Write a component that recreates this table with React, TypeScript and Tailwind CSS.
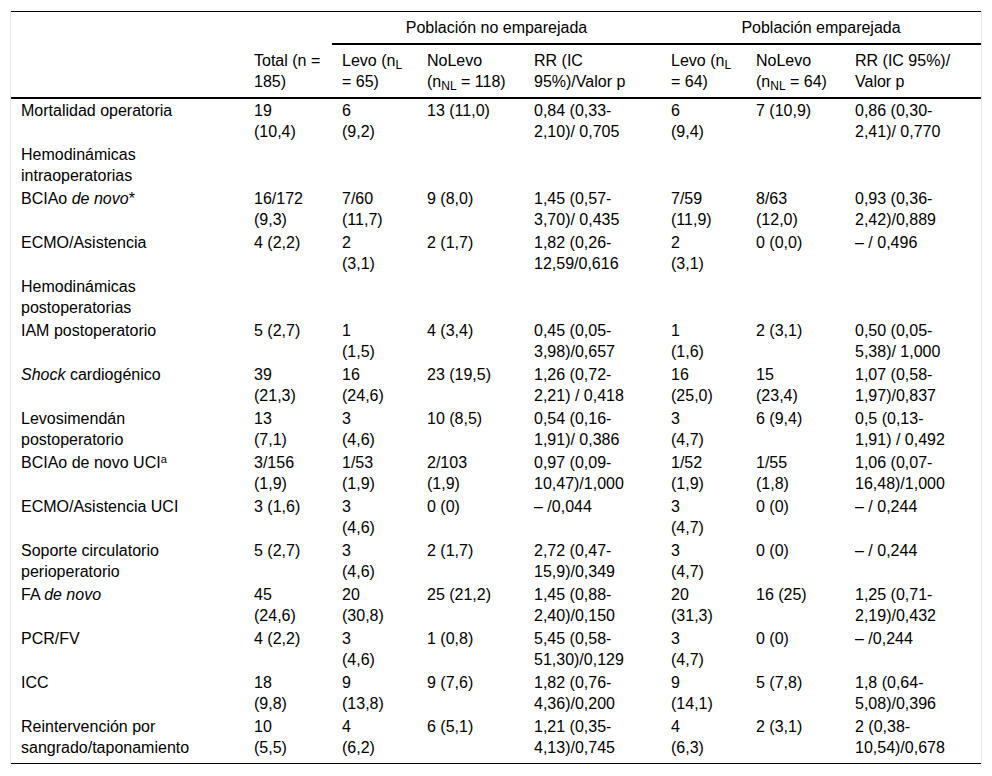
import React from "react";

type Cell = React.ReactNode[];

const rows: { label: React.ReactNode[]; cells: Cell[] }[] = [
  {
    label: ["Mortalidad operatoria"],
    cells: [["19", "(10,4)"], ["6", "(9,2)"], ["13 (11,0)"], ["0,84 (0,33-", "2,10)/ 0,705"], ["6", "(9,4)"], ["7 (10,9)"], ["0,86 (0,30-", "2,41)/ 0,770"]],
  },
  { label: ["Hemodinámicas", "intraoperatorias"], cells: [[], [], [], [], [], [], []] },
  {
    label: [<>BCIAo <i>de novo</i>*</>],
    cells: [["16/172", "(9,3)"], ["7/60", "(11,7)"], ["9 (8,0)"], ["1,45 (0,57-", "3,70)/ 0,435"], ["7/59", "(11,9)"], ["8/63", "(12,0)"], ["0,93 (0,36-", "2,42)/0,889"]],
  },
  {
    label: ["ECMO/Asistencia"],
    cells: [["4 (2,2)"], ["2", "(3,1)"], ["2 (1,7)"], ["1,82 (0,26-", "12,59/0,616"], ["2", "(3,1)"], ["0 (0,0)"], ["– / 0,496"]],
  },
  { label: ["Hemodinámicas", "postoperatorias"], cells: [[], [], [], [], [], [], []] },
  {
    label: ["IAM postoperatorio"],
    cells: [["5 (2,7)"], ["1", "(1,5)"], ["4 (3,4)"], ["0,45 (0,05-", "3,98)/0,657"], ["1", "(1,6)"], ["2 (3,1)"], ["0,50 (0,05-", "5,38)/ 1,000"]],
  },
  {
    label: [<><i>Shock</i> cardiogénico</>],
    cells: [["39", "(21,3)"], ["16", "(24,6)"], ["23 (19,5)"], ["1,26 (0,72-", "2,21) / 0,418"], ["16", "(25,0)"], ["15", "(23,4)"], ["1,07 (0,58-", "1,97)/0,837"]],
  },
  {
    label: ["Levosimendán", "postoperatorio"],
    cells: [["13", "(7,1)"], ["3", "(4,6)"], ["10 (8,5)"], ["0,54 (0,16-", "1,91)/ 0,386"], ["3", "(4,7)"], ["6 (9,4)"], ["0,5 (0,13-", "1,91) / 0,492"]],
  },
  {
    label: [<>BCIAo de novo UCI<sup className="text-[11px]">a</sup></>],
    cells: [["3/156", "(1,9)"], ["1/53", "(1,9)"], ["2/103", "(1,9)"], ["0,97 (0,09-", "10,47)/1,000"], ["1/52", "(1,9)"], ["1/55", "(1,8)"], ["1,06 (0,07-", "16,48)/1,000"]],
  },
  {
    label: ["ECMO/Asistencia UCI"],
    cells: [["3 (1,6)"], ["3", "(4,6)"], ["0 (0)"], ["– /0,044"], ["3", "(4,7)"], ["0 (0)"], ["– / 0,244"]],
  },
  {
    label: ["Soporte circulatorio", "perioperatorio"],
    cells: [["5 (2,7)"], ["3", "(4,6)"], ["2 (1,7)"], ["2,72 (0,47-", "15,9)/0,349"], ["3", "(4,7)"], ["0 (0)"], ["– / 0,244"]],
  },
  {
    label: [<>FA <i>de novo</i></>],
    cells: [["45", "(24,6)"], ["20", "(30,8)"], ["25 (21,2)"], ["1,45 (0,88-", "2,40)/0,150"], ["20", "(31,3)"], ["16 (25)"], ["1,25 (0,71-", "2,19)/0,432"]],
  },
  {
    label: ["PCR/FV"],
    cells: [["4 (2,2)"], ["3", "(4,6)"], ["1 (0,8)"], ["5,45 (0,58-", "51,30)/0,129"], ["3", "(4,7)"], ["0 (0)"], ["– /0,244"]],
  },
  {
    label: ["ICC"],
    cells: [["18", "(9,8)"], ["9", "(13,8)"], ["9 (7,6)"], ["1,82 (0,76-", "4,36)/0,200"], ["9", "(14,1)"], ["5 (7,8)"], ["1,8 (0,64-", "5,08)/0,396"]],
  },
  {
    label: ["Reintervención por", "sangrado/taponamiento"],
    cells: [["10", "(5,5)"], ["4", "(6,2)"], ["6 (5,1)"], ["1,21 (0,35-", "4,13)/0,745"], ["4", "(6,3)"], ["2 (3,1)"], ["2 (0,38-", "10,54)/0,678"]],
  },
];

function Lines({ lines }: { lines: React.ReactNode[] }) {
  return (
    <>
      {lines.map((l, i) => (
        <div key={i} className="whitespace-nowrap">
          {l}
        </div>
      ))}
    </>
  );
}

const Sub = ({ children }: { children: React.ReactNode }) => <sub className="text-[12px]">{children}</sub>;

export default function App() {
  const head2: React.ReactNode[][] = [
    [],
    ["Total (n =", "185)"],
    [<>Levo (n<Sub>L</Sub></>, "= 65)"],
    ["NoLevo", <>(n<Sub>NL</Sub> = 118)</>],
    ["RR (IC", "95%)/Valor p"],
    [<>Levo (n<Sub>L</Sub></>, "= 64)"],
    ["NoLevo", <>(n<Sub>NL</Sub> = 64)</>],
    ["RR (IC 95%)/", "Valor p"],
  ];
  return (
    <div className="min-h-[776px] bg-white px-[10px] pt-[11px] font-['Liberation_Sans',Arial,sans-serif] text-[16px] leading-[21px] text-black">
      <div className="w-[972px] border-x border-[#e8e8e8]">
        <table className="w-[970px] table-fixed border-separate border-spacing-0 text-left">
          <colgroup>
            <col className="w-[233px]" />
            <col className="w-[88px]" />
            <col className="w-[85px]" />
            <col className="w-[107px]" />
            <col className="w-[137px]" />
            <col className="w-[85px]" />
            <col className="w-[99px]" />
            <col className="w-[136px]" />
          </colgroup>
          <thead>
            <tr>
              <th className="border-t border-black px-[10px] pt-[5px] pb-[7px] font-normal"></th>
              <th className="border-t border-black px-[10px] pt-[5px] pb-[7px] font-normal"></th>
              <th colSpan={3} className="border-t border-b-2 border-black px-[10px] pt-[5px] pb-[5px] text-center font-normal">
                Población no emparejada
              </th>
              <th colSpan={3} className="border-t border-b-2 border-black px-[10px] pt-[5px] pb-[5px] text-center font-normal">
                Población emparejada
              </th>
            </tr>
            <tr>
              {head2.map((c, i) => (
                <th key={i} className="border-b-2 border-black px-[10px] pt-[5px] pb-[5px] align-top font-normal">
                  <Lines lines={c} />
                </th>
              ))}
            </tr>
          </thead>
          <tbody>
            {rows.map((r, ri) => {
              const last = ri === rows.length - 1;
              const cls = last
                ? "border-b border-black px-[10px] pt-px pb-[5px] align-top"
                : "px-[10px] py-px align-top";
              return (
                <tr key={ri}>
                  <td className={cls}>
                    <Lines lines={r.label} />
                  </td>
                  {r.cells.map((c, ci) => (
                    <td key={ci} className={cls}>
                      <div className="min-h-[42px]">
                        <Lines lines={c} />
                      </div>
                    </td>
                  ))}
                </tr>
              );
            })}
          </tbody>
        </table>
      </div>
    </div>
  );
}
